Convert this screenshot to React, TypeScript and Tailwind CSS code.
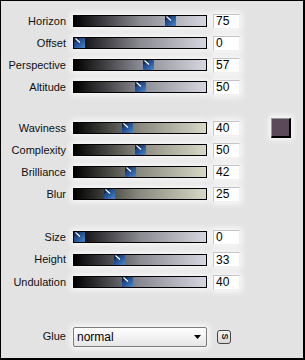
import React from "react";

type Row = { label: string; value: number };

const group1: Row[] = [
  { label: "Horizon", value: 75 },
  { label: "Offset", value: 0 },
  { label: "Perspective", value: 57 },
  { label: "Altitude", value: 50 },
];
const group2: Row[] = [
  { label: "Waviness", value: 40 },
  { label: "Complexity", value: 50 },
  { label: "Brilliance", value: 42 },
  { label: "Blur", value: 25 },
];
const group3: Row[] = [
  { label: "Size", value: 0 },
  { label: "Height", value: 33 },
  { label: "Undulation", value: 40 },
];

function Thumb() {
  return (
    <svg width="11" height="10" viewBox="0 0 11 10" className="block">
      <defs>
        <linearGradient id="tg" x1="0" y1="0" x2="1" y2="1">
          <stop offset="0" stopColor="#1a335c" />
          <stop offset="0.45" stopColor="#24508f" />
          <stop offset="1" stopColor="#4a88d4" />
        </linearGradient>
      </defs>
      <rect x="0" y="0" width="11" height="10" fill="url(#tg)" />
      <polygon points="0,0 6,0 0,5" fill="#16294a" />
      <line x1="1.5" y1="0.5" x2="6" y2="4.5" stroke="#ffffff" strokeWidth="1.1" />
    </svg>
  );
}

function Slider({ value, beige }: { value: number; beige?: boolean }) {
  const left = Math.round((121 * value) / 100);
  return (
    <div
      className={
        "relative w-[134px] h-[12px] border border-black shadow-[0_0_6px_2px_rgba(255,255,255,0.85)] " +
        (beige
          ? "bg-[linear-gradient(to_right,#000000,#8a8a80_50%,#d8d8c6)]"
          : "bg-[linear-gradient(to_right,#000000,#8a8a92_50%,#d6d6e0)]")
      }
    >
      <div className="absolute top-0" style={{ left }}>
        <Thumb />
      </div>
    </div>
  );
}

function SliderRow({ row, beige, extra, tall }: { row: Row; beige?: boolean; extra?: React.ReactNode; tall?: boolean }) {
  return (
    <div className={"flex items-center " + (tall ? "h-[22.5px]" : "h-[22px]")}>
      <div className="w-[66px] text-right text-[11px] leading-none text-[#101010] pr-[1px]">{row.label}</div>
      <div className="ml-[6px]">
        <Slider value={row.value} beige={beige} />
      </div>
      <div className="ml-[6px] w-[27px] h-[15px] bg-white border border-t-[#c4c4c4] border-l-[#c4c4c4] border-r-[#f0f0f0] border-b-[#f0f0f0] shadow-[0_0_6px_2px_rgba(255,255,255,0.85)] flex items-center pl-[2px] text-[12px] leading-none text-black">
        {row.value}
      </div>
      {extra}
    </div>
  );
}

export default function App() {
  return (
    <div
      className="w-[305px] h-[360px] bg-[#e3e3e3] border-l border-t border-black border-r-2 border-b-2 flex flex-col"
      style={{ fontFamily: '"Liberation Sans", Arial, sans-serif' }}
    >
      <div className="mt-[9px] flex flex-col">
        {group1.map((r) => (
          <SliderRow key={r.label} row={r} />
        ))}
      </div>
      <div className="mt-[19px] flex flex-col">
        {group2.map((r, i) => (
          <SliderRow
            key={r.label}
            row={r}
            beige
            extra={
              i === 0 ? (
                <div className="ml-[31px] w-[20px] h-[20px] bg-[#5b4858] border border-t-[#9a9a9a] border-l-[#9a9a9a] border-r-2 border-b-2 border-r-black border-b-black shadow-[0_0_6px_2px_rgba(255,255,255,0.85)]" />
              ) : null
            }
          />
        ))}
      </div>
      <div className="mt-[21px] flex flex-col">
        {group3.map((r) => (
          <SliderRow key={r.label} row={r} tall />
        ))}
      </div>
      <div className="mt-[32px] flex items-center h-[22px]">
        <div className="w-[66px] text-right text-[11px] leading-none text-[#101010] pr-[1px]">Glue</div>
        <div className="ml-[6px] w-[134px] h-[20px] rounded-[2px] border border-[#7c7c7c] bg-[linear-gradient(to_bottom,#ffffff,#e6e6e6)] shadow-[0_0_6px_2px_rgba(255,255,255,0.85)] flex items-center justify-between pl-[3px] pr-[5px]">
          <span className="text-[12px] leading-none text-black">normal</span>
          <svg width="7" height="4" viewBox="0 0 7 4">
            <polygon points="0,0 7,0 3.5,4" fill="#000" />
          </svg>
        </div>
        <div className="ml-[10px] w-[14px] h-[14px] rounded-[3px] border border-[#444] bg-[linear-gradient(to_bottom,#f4f4f4,#d8d8d8)] flex items-center justify-center">
          <span className="text-[9px] font-bold leading-none text-[#222] rotate-90">S</span>
        </div>
      </div>
    </div>
  );
}
